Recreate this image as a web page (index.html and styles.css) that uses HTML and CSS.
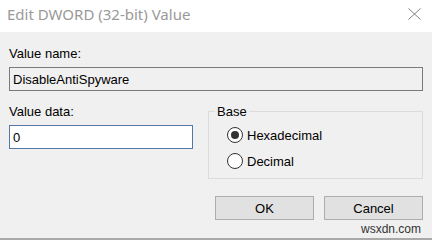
FILE: index.html
```html
<!DOCTYPE html>
<html lang="en">
<head>
    <meta charset="UTF-8">
    <title>Edit DWORD (32-bit) Value</title>
    <link rel="stylesheet" href="styles.css">
</head>
<body>

<div class="window">
    <div class="titlebar">
        <span class="title">Edit DWORD (32-bit) Value</span>
        <svg class="close" width="13" height="12" viewBox="0 0 13 12">
            <path d="M0.5 0.5 L12.5 11.5 M12.5 0.5 L0.5 11.5" stroke="#808080" stroke-width="1" fill="none"/>
        </svg>
    </div>

    <div class="dialog">
        <label class="label" for="valueName">Value name:</label>
        <input type="text" id="valueName" class="field field-name" value="DisableAntiSpyware" readonly>

        <div class="row">
            <div class="data-col">
                <label class="label" for="valueData">Value data:</label>
                <input type="text" id="valueData" class="field field-data" value="0">
            </div>
            <fieldset class="base-group">
                <legend>Base</legend>
                <div class="radio-row">
                    <span class="radio checked"></span>
                    <span>Hexadecimal</span>
                </div>
                <div class="radio-row">
                    <span class="radio"></span>
                    <span>Decimal</span>
                </div>
            </fieldset>
        </div>

        <div class="buttons">
            <button class="btn">OK</button>
            <button class="btn">Cancel</button>
        </div>
        <div class="watermark">wsxdn.com</div>
    </div>
</div>

</body>
</html>
```

FILE: styles.css
```css
body {
    margin: 0;
    padding: 0;
    font-family: "Liberation Sans", Arial, sans-serif;
    font-size: 13px;
    line-height: 15px;
    color: #000;
    background-color: #f0f0f0;
}

.window {
    width: 432px;
    height: 240px;
    display: flex;
    flex-direction: column;
    overflow: hidden;
}

.titlebar {
    height: 32px;
    background-color: #fff;
    display: flex;
    align-items: center;
    justify-content: space-between;
    padding: 0 11px 0 7px;
    flex-shrink: 0;
}

.title {
    font-family: "Noto Sans", sans-serif;
    font-size: 15px;
    color: #999;
    margin-top: -4px;
}

.close {
    margin-top: -5px;
}

.dialog {
    flex: 1;
    padding: 14px 9px 0 9px;
    border-bottom: 2px solid #a9a9a9;
    display: flex;
    flex-direction: column;
}

.label {
    display: block;
}

.field {
    display: block;
    box-sizing: border-box;
    height: 24px;
    margin: 6px 0 0 0;
    padding: 0 3px;
    font-family: "Liberation Sans", Arial, sans-serif;
    font-size: 13px;
    color: #000;
    outline: none;
}

.field-name {
    width: 100%;
    background-color: #f0f0f0;
    border: 1px solid #7a7a7a;
}

.field-data {
    width: 100%;
    background-color: #fff;
    border: 1px solid #5579a4;
}

.row {
    display: flex;
    margin-top: 13px;
}

.data-col {
    width: 184px;
}

.base-group {
    flex: 1;
    margin: 0 0 0 15px;
    padding: 8px 0 9px 6px;
    border: 1px solid #dcdcdc;
    display: flex;
    flex-direction: column;
    gap: 10px;
}

.base-group legend {
    padding: 0 2px;
    line-height: 15px;
}

.radio-row {
    display: flex;
    align-items: center;
    gap: 4px;
    height: 16px;
    margin-left: 12px;
}

.radio {
    width: 16px;
    height: 16px;
    box-sizing: border-box;
    border: 1px solid #333;
    border-radius: 50%;
    background-color: #fff;
    display: flex;
    align-items: center;
    justify-content: center;
}

.radio.checked::after {
    content: "";
    width: 8px;
    height: 8px;
    border-radius: 50%;
    background-color: #333;
}

.buttons {
    display: flex;
    justify-content: flex-end;
    gap: 10px;
    margin-top: 17px;
}

.btn {
    width: 99px;
    height: 24px;
    box-sizing: border-box;
    background-color: #e1e1e1;
    border: 1px solid #adadad;
    font-family: "Liberation Sans", Arial, sans-serif;
    font-size: 13px;
    color: #000;
    padding: 0;
}

.watermark {
    text-align: right;
    font-size: 12px;
    line-height: 14px;
    color: #333;
    margin-top: 2px;
    padding-right: 2px;
}
```
